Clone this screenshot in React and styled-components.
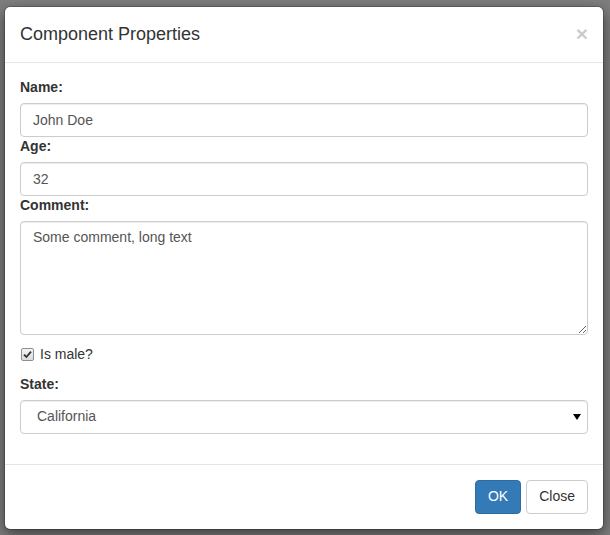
import React from 'react';
import styled, { createGlobalStyle } from 'styled-components';

const GlobalStyle = createGlobalStyle`
  * { box-sizing: border-box; }
  html, body {
    margin: 0;
    background: #7f7f7f;
    font-family: "Liberation Sans", Arial, sans-serif;
    font-size: 14px;
    line-height: 1.42857;
    color: #333;
  }
`;

const Page = styled.div`
  padding: 6px 6px 6px 4px;
  min-height: 535px;
`;

const Dialog = styled.div`
  width: 600px;
  background: #fff;
  border: 1px solid rgba(0, 0, 0, 0.2);
  border-radius: 6px;
  box-shadow: 0 5px 15px rgba(0, 0, 0, 0.5);
  background-clip: padding-box;
`;

const Header = styled.div`
  display: flex;
  align-items: flex-start;
  justify-content: space-between;
  padding: 15px 15px 14px;
  border-bottom: 1px solid #e5e5e5;
`;

const Title = styled.h4`
  margin: 0;
  font-size: 18px;
  font-weight: 500;
  line-height: 1.42857;
`;

const CloseX = styled.button`
  border: 0;
  background: transparent;
  padding: 0;
  margin-top: 1px;
  font-family: inherit;
  font-size: 21px;
  font-weight: 700;
  line-height: 1;
  color: #000;
  opacity: 0.2;
  cursor: pointer;
`;

const Body = styled.div`
  padding: 15px 15px 30px;
`;

const Label = styled.label`
  display: block;
  margin-bottom: 5px;
  font-weight: 700;
`;

const fieldStyles = `
  display: block;
  width: 100%;
  padding: 6px 12px;
  font-family: inherit;
  font-size: 14px;
  line-height: 1.42857;
  color: #555;
  background: #fff;
  border: 1px solid #ccc;
  border-radius: 4px;
  box-shadow: inset 0 1px 1px rgba(0, 0, 0, 0.075);
  outline: none;
`;

const Input = styled.input`
  ${fieldStyles}
  height: 34px;
`;

const TextArea = styled.textarea`
  ${fieldStyles}
  height: 114px;
  resize: vertical;
`;

const SelectWrap = styled.div`
  position: relative;
`;

const Select = styled.select`
  ${fieldStyles}
  height: 34px;
  padding: 6px 16px;
  appearance: none;
`;

const Caret = styled.svg`
  position: absolute;
  right: 7px;
  top: 14px;
  pointer-events: none;
`;

const CheckRow = styled.label`
  display: flex;
  align-items: center;
  gap: 6px;
  margin: 10px 0;
  min-height: 20px;
  padding-left: 1px;
  color: #333;
`;

const CheckBox = styled.span`
  display: inline-flex;
  align-items: center;
  justify-content: center;
  width: 13px;
  height: 13px;
  border: 1px solid #8f8f8f;
  border-radius: 2px;
  background: linear-gradient(#f4f4f4, #dcdcdc);
`;

const Footer = styled.div`
  display: flex;
  justify-content: flex-end;
  gap: 5px;
  padding: 15px;
  border-top: 1px solid #e5e5e5;
`;

const Button = styled.button`
  height: 34px;
  padding: 6px 12px;
  font-family: inherit;
  font-size: 14px;
  line-height: 1.42857;
  border-radius: 4px;
  border: 1px solid ${p => (p.$primary ? '#2e6da4' : '#ccc')};
  background: ${p => (p.$primary ? '#337ab7' : '#fff')};
  color: ${p => (p.$primary ? '#fff' : '#333')};
  cursor: pointer;
`;

export default function App() {
  return (
    <Page>
      <GlobalStyle />
      <Dialog>
        <Header>
          <Title>Component Properties</Title>
          <CloseX aria-label="Close">×</CloseX>
        </Header>
        <Body>
          <Label>Name:</Label>
          <Input defaultValue="John Doe" />
          <Label>Age:</Label>
          <Input defaultValue="32" />
          <Label>Comment:</Label>
          <TextArea defaultValue="Some comment, long text" />
          <CheckRow>
            <CheckBox>
              <svg width="9" height="9" viewBox="0 0 9 9">
                <path d="M1 4.6 L3.4 7 L8 1.6" fill="none" stroke="#333" strokeWidth="1.8" />
              </svg>
            </CheckBox>
            Is male?
          </CheckRow>
          <Label>State:</Label>
          <SelectWrap>
            <Select defaultValue="California">
              <option>California</option>
              <option>Nevada</option>
              <option>Oregon</option>
            </Select>
            <Caret width="8" height="6" viewBox="0 0 8 6">
              <path d="M0 0 H8 L4 6 Z" fill="#000" />
            </Caret>
          </SelectWrap>
        </Body>
        <Footer>
          <Button $primary>OK</Button>
          <Button>Close</Button>
        </Footer>
      </Dialog>
    </Page>
  );
}
